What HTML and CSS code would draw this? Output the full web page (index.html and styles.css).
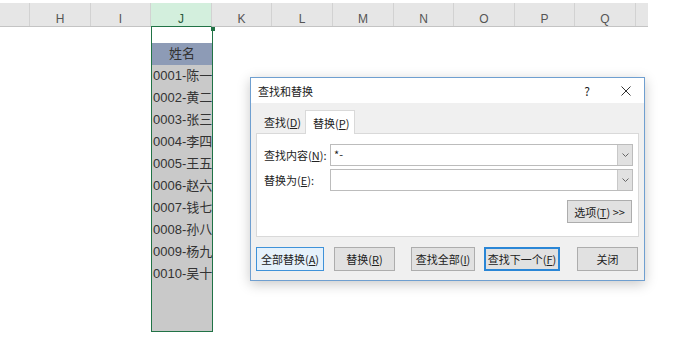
FILE: index.html
```html
<!DOCTYPE html>
<html lang="zh-CN">
<head>
    <meta charset="UTF-8">
    <title>查找和替换</title>
    <link rel="stylesheet" href="styles.css">
</head>
<body>
    <div class="sheet">
        <div class="col-heads">
            <div class="ch w30"></div>
            <div class="ch w61">H</div>
            <div class="ch w60">I</div>
            <div class="ch w61 sel">J</div>
            <div class="ch w60">K</div>
            <div class="ch w61">L</div>
            <div class="ch w61">M</div>
            <div class="ch w60">N</div>
            <div class="ch w61">O</div>
            <div class="ch w60">P</div>
            <div class="ch w61">Q</div>
            <div class="ch w12"></div>
        </div>
        <div class="cells">
            <div class="col-j">
                <span class="handle"></span>
                <div class="cell active"></div>
                <div class="cell head">姓名</div>
                <div class="cell">0001-陈一</div>
                <div class="cell">0002-黄二</div>
                <div class="cell">0003-张三</div>
                <div class="cell">0004-李四</div>
                <div class="cell">0005-王五</div>
                <div class="cell">0006-赵六</div>
                <div class="cell">0007-钱七</div>
                <div class="cell">0008-孙八</div>
                <div class="cell">0009-杨九</div>
                <div class="cell">0010-吴十</div>
            </div>
        </div>

        <div class="dialog">
            <div class="dlg-title">
                <span class="dlg-name">查找和替换</span>
                <span class="help">?</span>
                <svg class="close" width="10" height="10" viewBox="0 0 10 10">
                    <path d="M0.5 0.5 L9.5 9.5 M9.5 0.5 L0.5 9.5" stroke="#333" stroke-width="1" fill="none"/>
                </svg>
            </div>
            <div class="dlg-body">
                <div class="tabs">
                    <div class="tab">查找(<u>D</u>)</div>
                    <div class="tab on">替换(<u>P</u>)</div>
                </div>
                <div class="panel">
                    <div class="field">
                        <label>查找内容(<u>N</u>):</label>
                        <div class="combo">
                            <span class="val">*-</span>
                            <span class="drop">
                                <svg width="7" height="4" viewBox="0 0 7 4"><path d="M0.5 0.5 L3.5 3.5 L6.5 0.5" stroke="#666" fill="none"/></svg>
                            </span>
                        </div>
                    </div>
                    <div class="field">
                        <label>替换为(<u>E</u>):</label>
                        <div class="combo">
                            <span class="val"></span>
                            <span class="drop">
                                <svg width="7" height="4" viewBox="0 0 7 4"><path d="M0.5 0.5 L3.5 3.5 L6.5 0.5" stroke="#666" fill="none"/></svg>
                            </span>
                        </div>
                    </div>
                    <div class="opts-row">
                        <button class="btn opts">选项(<u>T</u>) &gt;&gt;</button>
                    </div>
                </div>
                <div class="actions">
                    <button class="btn b-all hot">全部替换(<u>A</u>)</button>
                    <button class="btn b-rep">替换(<u>R</u>)</button>
                    <button class="btn b-findall">查找全部(<u>I</u>)</button>
                    <button class="btn b-next def">查找下一个(<u>F</u>)</button>
                    <button class="btn b-close">关闭</button>
                </div>
            </div>
        </div>
    </div>
</body>
</html>
```

FILE: styles.css
```css
body {
    margin: 0;
    padding: 0;
    background: #fff;
    font-family: 'Liberation Sans', 'Noto Sans CJK SC', sans-serif;
}
.sheet {
    position: relative;
    width: 680px;
    height: 349px;
    overflow: hidden;
}
.col-heads {
    display: flex;
    margin-top: 3px;
    width: 648px;
    height: 24px;
    background: #e6e6e6;
    border-bottom: 1px solid #c4c4c4;
    box-sizing: border-box;
}
.ch {
    box-sizing: border-box;
    height: 23px;
    padding-top: 9px;
    line-height: 14px;
    font-size: 12px;
    color: #555;
    text-align: center;
    border-right: 1px solid #d2d2d2;
}
.ch.w12 { border-right: none; }
.ch.sel {
    background: #d3efdd;
    border-bottom: 1px solid #217346;
    height: 24px;
    color: #2a5a3c;
}
.w30 { width: 30px; }
.w61 { width: 61px; }
.w60 { width: 60px; }
.w12 { width: 12px; }

.cells {
    display: flex;
    padding-left: 151px;
}
.col-j {
    position: relative;
    box-sizing: border-box;
    width: 62px;
    height: 305px;
    background: #c9c9c9;
    border: 1px solid #217346;
    border-top: none;
}
.handle {
    position: absolute;
    right: -3px;
    top: 0;
    width: 4px;
    height: 4px;
    background: #217346;
}
.cell {
    height: 22px;
    line-height: 22px;
    font-size: 13px;
    color: #333;
    white-space: nowrap;
    overflow: hidden;
    padding-left: 1px;
}
.cell.active {
    height: 16px;
    background: #fff;
}
.cell.head {
    background: #8d9bb6;
    text-align: center;
    padding-left: 0;
}

/* dialog */
.dialog {
    position: absolute;
    left: 250px;
    top: 77px;
    width: 395px;
    height: 204px;
    box-sizing: border-box;
    border: 1px solid #6f9fd0;
    background: #f0f0f0;
    box-shadow: 0 3px 12px rgba(0, 0, 0, 0.22);
    font-family: 'Noto Sans CJK SC', sans-serif;
    font-size: 11px;
    color: #222;
}
.dlg-title {
    display: flex;
    align-items: center;
    height: 25px;
    background: #fff;
    padding: 0 13px 0 7px;
}
.dlg-name {
    flex: 1;
}
.help {
    font-size: 12px;
    margin-right: 31px;
}
.dlg-body {
    padding: 6px 5px 0 5px;
}
.tabs {
    display: flex;
    align-items: flex-end;
    height: 24px;
    padding-left: 1px;
}
.tab {
    box-sizing: border-box;
    height: 22px;
    line-height: 22px;
    padding: 0 0 0 7px;
    width: 48px;
    white-space: nowrap;
}
.tab.on {
    height: 24px;
    line-height: 24px;
    width: 50px;
    background: #fff;
    border: 1px solid #d9d9d9;
    border-bottom: none;
    padding: 0 0 0 7px;
    position: relative;
    z-index: 1;
    margin-bottom: -1px;
}
.panel {
    box-sizing: border-box;
    height: 104px;
    background: #fff;
    border: 1px solid #d9d9d9;
    padding: 10px 5px 0 7px;
}
.field {
    display: flex;
    align-items: center;
    margin-bottom: 3px;
}
.field label {
    width: 66px;
    white-space: nowrap;
}
.combo {
    display: flex;
    flex: 1;
    box-sizing: border-box;
    height: 22px;
    border: 1px solid #bcbcbc;
    background: #fff;
}
.val {
    flex: 1;
    padding-left: 3px;
    line-height: 18px;
}
.drop {
    display: flex;
    align-items: center;
    justify-content: center;
    box-sizing: border-box;
    width: 15px;
    background: #e1e1e1;
    border-left: 1px solid #c8c8c8;
}
.opts-row {
    display: flex;
    justify-content: flex-end;
    margin-top: 9px;
    padding-right: 1px;
}
.btn {
    box-sizing: border-box;
    height: 24px;
    padding: 0;
    background: #e1e1e1;
    border: 1px solid #adadad;
    font-family: 'Noto Sans CJK SC', sans-serif;
    font-size: 11px;
    color: #222;
    white-space: nowrap;
}
.btn.opts {
    width: 65px;
    height: 23px;
}
.actions {
    display: flex;
    margin-top: 10px;
}
.btn.hot {
    background: #e5f1fb;
    border-color: #3f92d9;
}
.btn.def {
    border: 2px solid #2a86d6;
}
.b-all { width: 68px; }
.b-rep { width: 61px; margin-left: 10px; }
.b-findall { width: 64px; margin-left: 16px; }
.b-next { width: 76px; margin-left: 9px; }
.b-close { width: 61px; margin-left: 17px; }
```
